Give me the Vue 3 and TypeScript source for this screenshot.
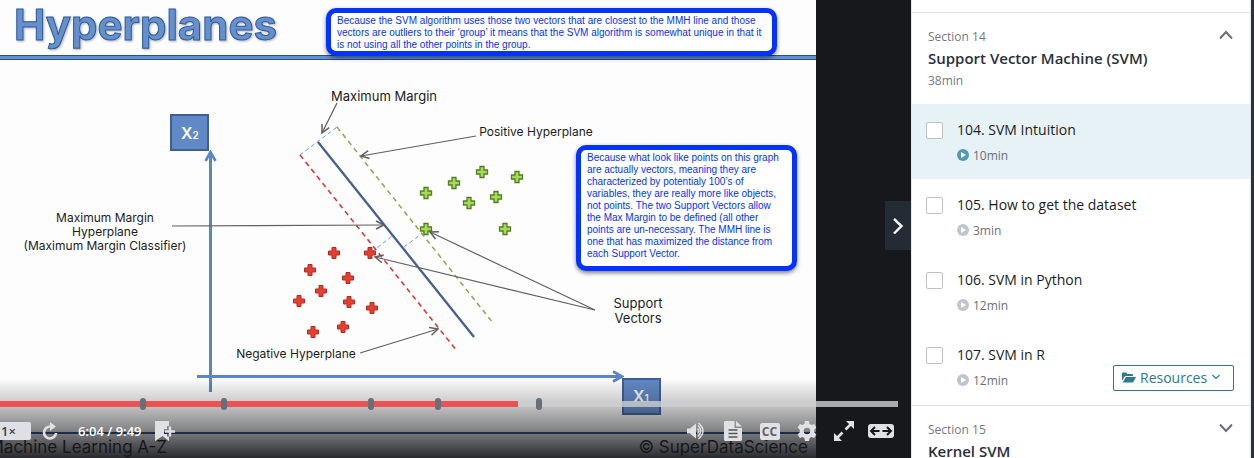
<script setup lang="ts">
import { ref } from 'vue'

interface Lecture {
  id: number
  title: string
  length: string
  active?: boolean
  resources?: boolean
}

type Point = [number, number]

const lectures: Lecture[] = [
  { id: 104, title: 'SVM Intuition', length: '10min', active: true },
  { id: 105, title: 'How to get the dataset', length: '3min' },
  { id: 106, title: 'SVM in Python', length: '12min' },
  { id: 107, title: 'SVM in R', length: '12min', resources: true },
]

const done = ref<number[]>([])

const redPoints: Point[] = [
  [334, 253], [370, 253], [310, 270], [348, 278], [321, 291],
  [299, 301], [349, 302], [372, 308], [343, 327], [313, 332],
]
const greenPoints: Point[] = [
  [482, 172], [517, 177], [454, 183], [426, 193], [496, 197],
  [469, 203], [426, 229], [505, 229],
]

const trackLength = 898
const played = 518
const bookmarks = [143, 224, 371, 438, 539]
const percent = (x: number) => `${(x / trackLength) * 100}%`
</script>

<template>
  <div class="page">
    <main class="player">
      <div class="stage">
        <svg class="slide" viewBox="0 0 816 458" preserveAspectRatio="xMinYMin slice" role="img" aria-label="Hyperplanes slide">
          <defs>
            <filter id="soft" x="-10%" y="-20%" width="120%" height="150%">
              <feDropShadow dx="1" dy="1" stdDeviation="1" flood-color="#000" flood-opacity="0.3" />
            </filter>
            <marker id="tip" viewBox="0 0 10 10" refX="9" refY="5" markerWidth="10" markerHeight="10" markerUnits="userSpaceOnUse" orient="auto">
              <path d="M1 1 9 5 1 9" fill="none" stroke="#606060" stroke-width="1.5" />
            </marker>
            <marker id="axis-tip" viewBox="0 0 12 14" refX="10" refY="7" markerWidth="12" markerHeight="14" markerUnits="userSpaceOnUse" orient="auto">
              <path d="M1 2 10 7 1 12" fill="none" stroke="#5a86c2" stroke-width="2.6" />
            </marker>
            <path id="plus" d="M-2 -5.500H2V-2H5.500V2H2V5.500H-2V2H-5.500V-2H-2Z" />
          </defs>
          <rect width="816" height="458" fill="#fdfdfd" />
          <rect y="55" width="816" height="5" fill="#6391d0" />
          <path d="M0 55.5H816M0 59.5H816" stroke="#2c4f86" />
          <text class="headline" x="14" y="40" filter="url(#soft)">Hyperplanes</text>

          <g class="axis">
            <path d="M210.500 392V152" marker-end="url(#axis-tip)" />
            <path d="M197 376.500H622" marker-end="url(#axis-tip)" />
          </g>
          <g class="axis-box">
            <rect x="171" y="115" width="37" height="35" />
            <rect x="623" y="379" width="37" height="35" />
            <text x="181" y="139">X<tspan class="sub">2</tspan></text>
            <text x="633" y="402">X<tspan class="sub">1</tspan></text>
          </g>

          <path d="M300 155 337 127M372 252 392 236M404 247 424 232" class="guide" />
          <path d="M337 127 493 323" class="dash green" />
          <path d="M300 155 457 351" class="dash red" />
          <path d="M318 142 474 337" stroke="#45608f" stroke-width="2.300" />

          <g fill="#e5402f" stroke="#b32a20">
            <use v-for="([x, y], i) in redPoints" :key="i" href="#plus" :x="x" :y="y" />
          </g>
          <g fill="#a4dc58" stroke="#557c22" stroke-width="1.300">
            <use v-for="([x, y], i) in greenPoints" :key="i" href="#plus" :x="x" :y="y" />
          </g>

          <g class="pointer">
            <path d="M337 103 322 133" />
            <path d="M476 136 361 156" />
            <path d="M172 226 384 225" />
            <path d="M360 353 438 329" />
            <path d="M595 310 430 232" />
            <path d="M595 310 375 257" />
          </g>

          <g class="label">
            <text x="384" y="101">Maximum Margin</text>
            <text x="536" y="136" class="small">Positive Hyperplane</text>
            <text x="105" y="222" class="small">Maximum Margin</text>
            <text x="105" y="236" class="small">Hyperplane</text>
            <text x="105" y="250" class="small">(Maximum Margin Classifier)</text>
            <text x="296" y="358" class="small">Negative Hyperplane</text>
            <text x="638" y="308">Support</text>
            <text x="638" y="323">Vectors</text>
          </g>

          <path d="M0 433H816" stroke="#24477f" stroke-width="2" />
          <text x="167" y="453" class="footer">Machine Learning A-Z</text>
          <text x="808" y="453" class="footer">© SuperDataScience</text>

          <foreignObject x="316" y="0" width="470" height="70">
            <p class="note note-wide">Because the SVM algorithm uses those two vectors that are closest to the MMH line and those vectors are outliers to their ‘group’ it means that the SVM algorithm is somewhat unique in that it is not using all the other points in the group.</p>
          </foreignObject>
          <foreignObject x="566" y="135" width="240" height="150">
            <p class="note">Because what look like points on this graph are actually vectors, meaning they are characterized by potentialy 100’s of variables, they are really more like objects, not points. The two Support Vectors allow the Max Margin to be defined (all other points are un-necessary. The MMH line is one that has maximized the distance from each Support Vector.</p>
          </foreignObject>
        </svg>
      </div>

      <button class="collapse" type="button" aria-label="Hide course content">
        <svg width="12" height="18" viewBox="0 0 12 18"><path d="M2 2 9.500 9 2 16.500" fill="none" stroke="#fff" stroke-width="2.400" /></svg>
      </button>

      <div class="controls">
        <div class="track">
          <div class="played" :style="{ width: percent(played) }"></div>
          <span v-for="b in bookmarks" :key="b" class="bookmark" :style="{ left: percent(b) }"></span>
        </div>
        <div class="buttons">
          <button type="button" class="speed">1×</button>
          <button type="button" class="control" aria-label="Rewind">
            <svg width="16" height="18" viewBox="0 0 16 18">
              <path d="M8.500 4.500A6 6 0 1 0 14 11" fill="none" stroke="currentColor" stroke-width="2.600" />
              <path d="M8 0 14 4.500 8 9Z" fill="currentColor" />
            </svg>
          </button>
          <span class="time">6:04 / 9:49</span>
          <button type="button" class="control" aria-label="Add bookmark">
            <svg width="20" height="20" viewBox="0 0 20 20">
              <path d="M0 0H14V5H12V8H9V13H12V15.500H14V20L7.500 15 0 20Z" fill="currentColor" />
              <path d="M15 5.500V15.500M10 10.500H20" stroke="currentColor" stroke-width="2.400" />
            </svg>
          </button>
          <span class="spacer"></span>
          <button type="button" class="control" aria-label="Volume">
            <svg width="20" height="18" viewBox="0 0 20 18">
              <path d="M1 6.500H4L10 1.500V16.500L4 11.500H1Z" fill="currentColor" />
              <path d="M11.500 6.500Q14 9 11.500 11.500M12 3.500Q17.500 9 12 14.500M12.500 1Q21.500 9 12.500 17" fill="none" stroke="currentColor" stroke-width="1.500" />
            </svg>
          </button>
          <button type="button" class="control" aria-label="Transcript">
            <svg width="18" height="20" viewBox="0 0 18 20">
              <path d="M1 0H10.500V7H18V19L17 20H1L0 19V1Z" fill="currentColor" />
              <path d="M12 0 18 5.500H12Z" fill="currentColor" />
              <path d="M4.500 9H13.500M4.500 12.500H13.500M4.500 16H13.500" stroke="#55575b" stroke-width="1.300" />
            </svg>
          </button>
          <button type="button" class="control" aria-label="Captions"><span class="cc">CC</span></button>
          <button type="button" class="control" aria-label="Settings">
            <svg width="20" height="20" viewBox="0 0 20 20">
              <path fill="currentColor" fill-rule="evenodd" d="M8 0H12L12.600 2.900 14.500 4 17.200 3 19.300 6.500 17.200 8.700V11.300L19.300 13.500 17.200 17 14.500 16 12.600 17.100 12 20H8L7.400 17.100 5.500 16 2.800 17 .7 13.500 2.800 11.300V8.700L.7 6.500 2.800 3 5.500 4 7.400 2.900ZM10 6.700A3.300 3.300 0 1 0 10 13.300 3.300 3.300 0 1 0 10 6.700Z" />
            </svg>
          </button>
          <button type="button" class="control" aria-label="Fullscreen">
            <svg width="20" height="20" viewBox="0 0 20 20">
              <path d="M11.500 8.500 17 3M3 17 8.500 11.500" stroke="currentColor" stroke-width="2.600" />
              <path d="M12 0H20V8ZM0 12V20H8Z" fill="currentColor" />
            </svg>
          </button>
          <button type="button" class="control" aria-label="Expanded view">
            <svg width="26" height="14" viewBox="0 0 26 14">
              <rect width="26" height="14" rx="3" fill="currentColor" />
              <path d="M3 7H11.500M7 3 3 7 7 11M14.500 7H23M19 3 23 7 19 11" fill="none" stroke="#17181d" stroke-width="2" />
            </svg>
          </button>
        </div>
      </div>
    </main>

    <aside class="sidebar">
      <section class="section">
        <button class="section-head" type="button" aria-expanded="true">
          <span class="head-text">
            <span class="muted">Section 14</span>
            <span class="section-title">Support Vector Machine (SVM)</span>
            <span class="muted duration">38min</span>
          </span>
          <svg class="chevron" width="14" height="10" viewBox="0 0 14 10"><path d="M1 8.500 7 2 13 8.500" /></svg>
        </button>
        <ul class="lectures">
          <li v-for="l in lectures" :key="l.id" class="lecture" :class="{ active: l.active }">
            <input :id="`lecture-${l.id}`" v-model="done" type="checkbox" :value="l.id" />
            <div class="lecture-body">
              <label :for="`lecture-${l.id}`">{{ l.id }}. {{ l.title }}</label>
              <span class="meta">
                <svg width="12" height="12" viewBox="0 0 12 12">
                  <circle cx="6" cy="6" r="6" fill="currentColor" />
                  <path d="M4 3 9 6 4 9Z" fill="#fff" />
                </svg>
                <span>{{ l.length }}</span>
              </span>
            </div>
            <button v-if="l.resources" type="button" class="resources">
              <svg width="14" height="11" viewBox="0 0 14 11" fill="currentColor">
                <path d="M0 8.500V1.500Q0 .5 1 .5H4Q5 .5 5 2H10Q11 2 11 3V4H4Q3 4 2.500 4.700Z" />
                <path d="M3.800 5H14L11.500 9.800Q11 10.500 10.300 10.500H.7Z" />
              </svg>
              <span>Resources</span>
              <svg width="10" height="6" viewBox="0 0 10 6"><path d="M1.500 1 5 4.500 8.500 1" fill="none" stroke="currentColor" stroke-width="1.200" /></svg>
            </button>
          </li>
        </ul>
      </section>
      <section class="section">
        <button class="section-head" type="button" aria-expanded="false">
          <span class="head-text">
            <span class="muted">Section 15</span>
            <span class="section-title">Kernel SVM</span>
          </span>
          <svg class="chevron" width="14" height="10" viewBox="0 0 14 10"><path d="M1 1.500 7 8 13 1.500" /></svg>
        </button>
      </section>
    </aside>
  </div>
</template>

<style>
body {
  margin: 0;
}
</style>

<style scoped>
.page {
  display: flex;
  height: 100vh;
  overflow: hidden;
  background: #2a3441;
  font-family: "Open Sans", "Noto Sans", sans-serif;
}
button {
  border: 0;
  padding: 0;
  background: none;
  font: inherit;
  color: inherit;
}
svg {
  display: block;
  flex: none;
}

.player {
  position: relative;
  flex: 1;
  min-width: 0;
  background: #17181c;
}
.stage {
  height: 100%;
  margin-right: 95px;
}
.slide {
  width: 100%;
  height: 100%;
}
.headline {
  font: 700 42px Inter, sans-serif;
  fill: #6590cb;
  stroke: #2f5a9c;
  stroke-width: 1px;
}
.axis path {
  stroke: #5a86c2;
  stroke-width: 3px;
}
.axis-box rect {
  fill: #6189c5;
  stroke: #3f5f97;
  stroke-width: 2px;
}
.axis-box text {
  font: 600 16px Inter, sans-serif;
  fill: #fff;
}
.axis-box .sub {
  font-size: 10px;
}
.guide {
  fill: none;
  stroke: #6f93c9;
  stroke-dasharray: 4 3;
}
.dash {
  stroke-width: 1.5px;
  stroke-dasharray: 5 4;
}
.green {
  stroke: #93a552;
}
.red {
  stroke: #e22b2b;
}
.pointer path {
  stroke: #606060;
  stroke-width: 1.2px;
  marker-end: url(#tip);
}
.label text {
  font: 400 13px Inter, sans-serif;
  fill: #1c1c1c;
  text-anchor: middle;
}
.label .small {
  font-size: 12px;
}
.footer {
  font: 400 17px Inter, sans-serif;
  fill: #111;
  text-anchor: end;
}
.note {
  box-sizing: border-box;
  width: 221px;
  height: 126px;
  margin: 10px;
  padding: 2px 6px;
  border: 5px solid #0432ff;
  border-radius: 10px;
  background: #fff;
  box-shadow: 0 2px 4px rgba(0, 0, 0, 0.5);
  color: #0432ff;
  font: 10px/12px "Liberation Sans", Arial, sans-serif;
}
.note-wide {
  width: 451px;
  height: 48px;
  margin: 8px 10px;
}

.collapse {
  position: absolute;
  top: 201px;
  right: 0;
  display: flex;
  align-items: center;
  justify-content: center;
  width: 26px;
  height: 49px;
  background: #232b34;
}

.controls {
  position: absolute;
  inset: auto 0 0;
  padding: 23px 12px 9px 0;
  background: linear-gradient(rgba(23, 24, 28, 0), rgba(23, 24, 28, 0.2) 28%, rgba(23, 24, 28, 0.5) 62%, rgba(23, 24, 28, 0.92));
  color: #e0e1e4;
}
.track {
  position: relative;
  height: 6px;
  margin-right: 1px;
  background: rgba(205, 206, 210, 0.8);
}
.played {
  height: 100%;
  background: #ec5252;
}
.bookmark {
  position: absolute;
  top: -3px;
  width: 6px;
  height: 12px;
  margin-left: -3px;
  border-radius: 3px;
  background: #686f7a;
}
.buttons {
  display: flex;
  align-items: center;
  height: 36px;
  margin-top: 6px;
}
.speed {
  width: 31px;
  height: 18px;
  padding-right: 14px;
  border-radius: 0 2px 2px 0;
  background: #dfe0e3;
  color: #3c414a;
  font-size: 13px;
  font-weight: 600;
  line-height: 18px;
}
.control {
  display: flex;
  align-items: center;
  justify-content: center;
  width: 37px;
  height: 24px;
}
.time {
  margin: 0 5px 0 10px;
  color: #fff;
  font-size: 13px;
  font-weight: 600;
}
.spacer {
  flex: 1;
}
.cc {
  width: 20px;
  border-radius: 2px;
  background: currentColor;
  font-size: 12px;
  font-weight: 700;
  line-height: 17px;
}
.cc::first-line {
  color: #606267;
}

.sidebar {
  box-sizing: border-box;
  width: 340px;
  margin-right: 3px;
  padding-top: 12px;
  border: solid #e8e9eb;
  border-width: 0 1px;
  background: #fff;
}
.section {
  border-top: 1px solid #dcdddf;
}
.section-head {
  display: flex;
  justify-content: space-between;
  width: 100%;
  padding: 14px 17px 13px 16px;
  text-align: left;
}
.head-text {
  display: flex;
  flex-direction: column;
}
.muted {
  color: #75797f;
  font-size: 12px;
  line-height: 20px;
}
.duration {
  margin-top: 2px;
}
.section-title {
  color: #29303b;
  font-size: 15px;
  font-weight: 600;
  line-height: 22px;
}
.chevron {
  margin-top: 3px;
  fill: none;
  stroke: #686f7a;
  stroke-width: 2px;
}
.lectures {
  margin: 0;
  padding: 0 0 1px;
  list-style: none;
}
.lecture {
  display: flex;
  box-sizing: border-box;
  min-height: 75px;
  padding: 16px 16px 13px 14px;
}
.active {
  background: #e6f2f5;
}
.lecture input {
  appearance: none;
  box-sizing: border-box;
  width: 17px;
  height: 17px;
  margin: 2px 14px 0 0;
  border: 1px solid #bfc1c5;
  border-radius: 2px;
  background: #fff;
}
.lecture input:checked {
  background: #007791;
}
.lecture-body {
  display: flex;
  flex: 1;
  flex-direction: column;
  gap: 6px;
}
.lecture label {
  color: #1a1d22;
  font-size: 14px;
  line-height: 20px;
}
.meta {
  display: flex;
  gap: 4px;
  color: #bfc4ce;
}
.meta svg {
  margin-top: 3px;
}
.meta span {
  color: #6d7075;
  font-size: 12px;
  line-height: 20px;
}
.active .meta {
  color: #5599ae;
}
.resources {
  display: flex;
  align-items: center;
  align-self: flex-end;
  gap: 4px;
  box-sizing: border-box;
  width: 121px;
  height: 26px;
  padding: 0 8px 2px;
  border: 1px solid #2a7a90;
  border-radius: 2px;
  background: #fff;
  color: #2a7a90;
  font-size: 14px;
}
</style>
